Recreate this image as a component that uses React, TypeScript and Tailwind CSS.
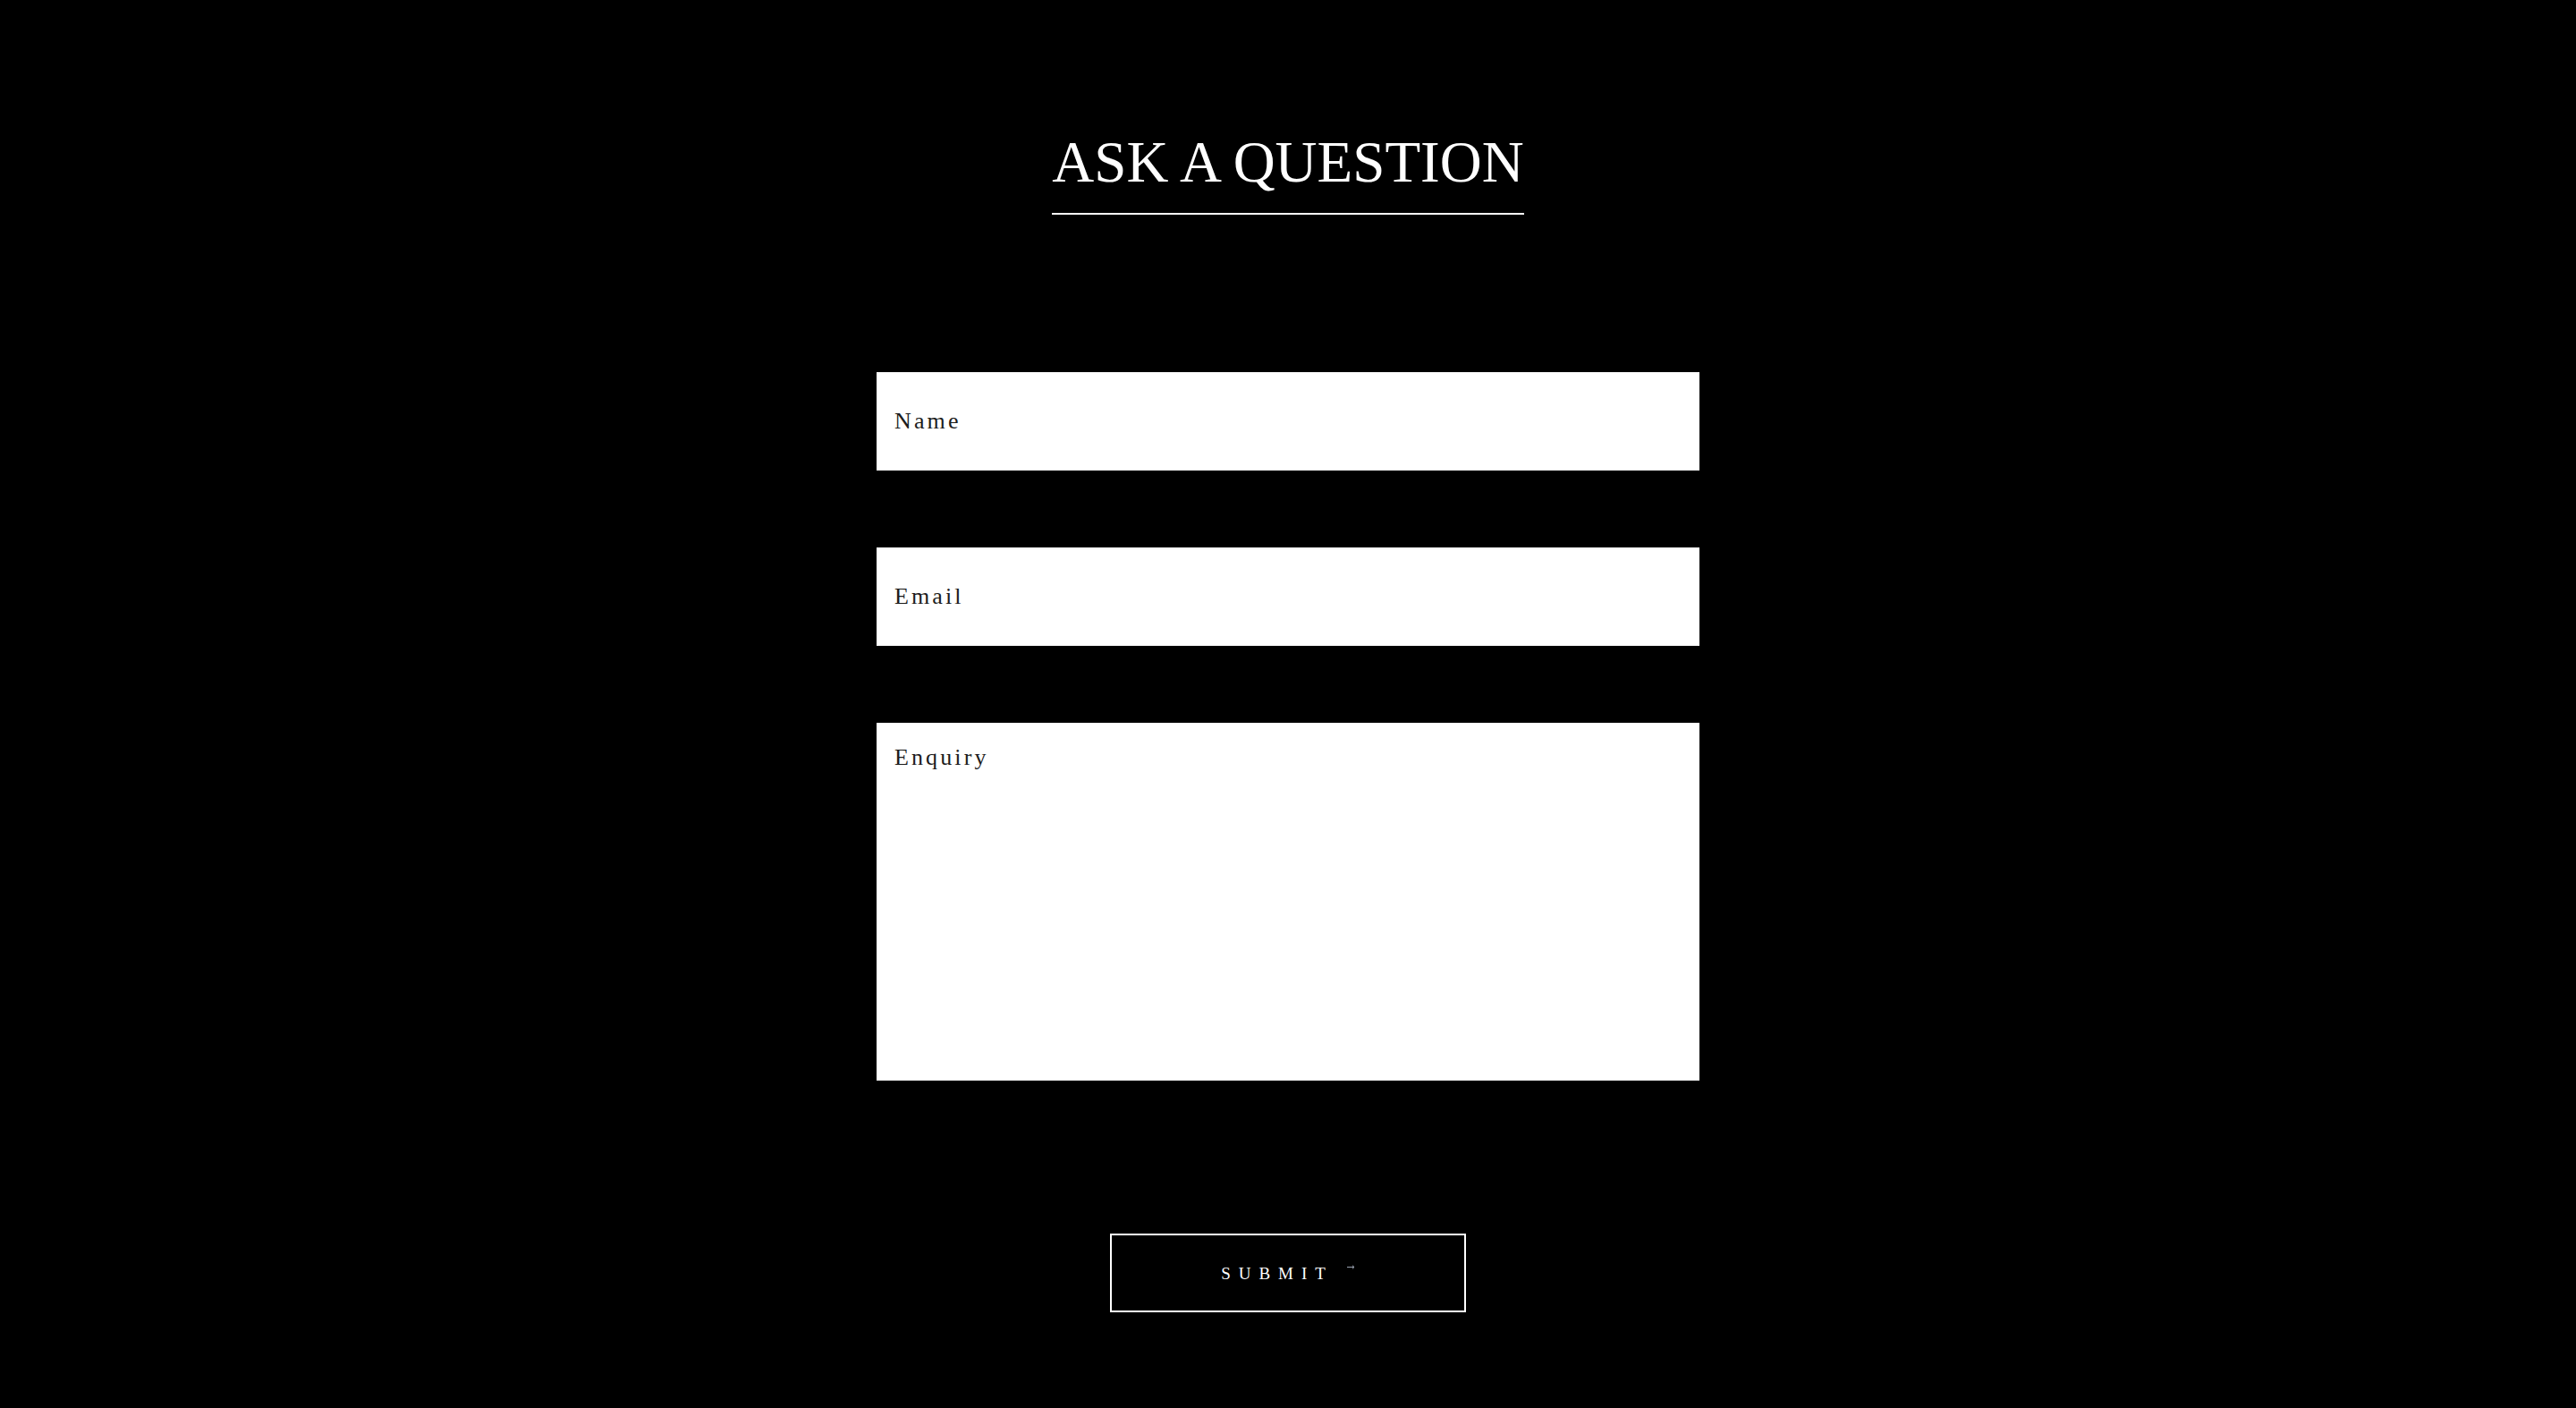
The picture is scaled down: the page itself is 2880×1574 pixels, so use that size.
import { useState } from "react";

export default function App() {
  const [name, setName] = useState("");
  const [email, setEmail] = useState("");
  const [enquiry, setEnquiry] = useState("");

  return (
    <div className="min-h-screen w-full bg-black font-['Liberation_Serif',serif] text-white">
      <div className="flex flex-col items-center pt-[149px] pb-[107px]">
        {/* Heading */}
        <h1 className="inline-block border-b-2 border-white pb-[24px] text-[65px] font-normal leading-none tracking-normal text-white">
          ASK A QUESTION
        </h1>

        {/* Form */}
        <form
          className="mt-[176px] flex w-[920px] flex-col gap-[86px]"
          onSubmit={(e) => e.preventDefault()}
        >
          <input
            type="text"
            value={name}
            onChange={(e) => setName(e.target.value)}
            placeholder="Name"
            className="h-[110px] w-full bg-white px-5 text-[26px] tracking-[0.12em] text-[#1c1c1c] outline-none placeholder:text-[#1c1c1c]"
          />
          <input
            type="email"
            value={email}
            onChange={(e) => setEmail(e.target.value)}
            placeholder="Email"
            className="h-[110px] w-full bg-white px-5 text-[26px] tracking-[0.12em] text-[#1c1c1c] outline-none placeholder:text-[#1c1c1c]"
          />
          <textarea
            value={enquiry}
            onChange={(e) => setEnquiry(e.target.value)}
            placeholder="Enquiry"
            className="h-[400px] w-full resize-none bg-white px-5 pt-6 text-[26px] leading-[1.15] tracking-[0.12em] text-[#1c1c1c] outline-none placeholder:text-[#1c1c1c]"
          />

          {/* Submit */}
          <div className="mt-[85px] flex justify-center">
            <button
              type="submit"
              className="flex h-[88px] w-[398px] items-center justify-center border-2 border-white bg-black"
            >
              <span className="text-[19px] leading-none tracking-[0.47em] text-white">
                SUBMIT
              </span>
              <svg
                width="9"
                height="5"
                viewBox="0 0 9 5"
                className="mb-[13px] ml-[15px] text-gray-400"
                fill="none"
                stroke="currentColor"
              >
                <path d="M0 2.5h8M6 0.7l2 1.8-2 1.8" strokeWidth="1" />
              </svg>
            </button>
          </div>
        </form>
      </div>
    </div>
  );
}
